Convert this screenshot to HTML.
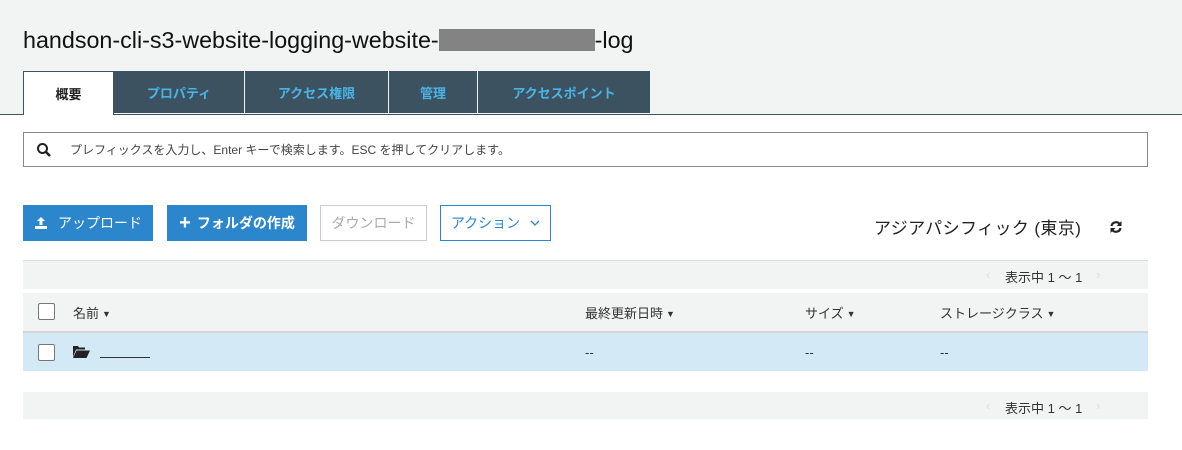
<html><head><style>
body{margin:0;width:1182px;height:450px;background:#fff;font-family:"Liberation Sans","Noto Sans CJK JP",sans-serif;position:relative;overflow:hidden;color:#222}
.a{position:absolute}
.hdr{left:0;top:0;width:1182px;height:114px;background:#f2f3f3;border-bottom:1px solid #3e5362}
.tab{position:absolute;top:71px;height:42px;background:#3d5261;color:#4ab4e6;font-size:13px;font-weight:bold;display:flex;align-items:center;justify-content:center;border-right:1px solid #f2f3f3;box-sizing:border-box}
.btn{position:absolute;top:205px;height:36px;box-sizing:border-box;font-size:14px;display:flex;align-items:center;justify-content:center}
.cb{position:absolute;width:15px;height:15px;border:1px solid #777;border-radius:2px;background:#fff;left:38px}
.t{font-size:13px;color:#333;position:absolute}
.ar{font-size:9px;vertical-align:1px;margin-left:3px}
</style></head><body>
<div class="a hdr"></div>
<div class="a" style="left:23px;top:27px;font-size:23.3px;color:#111">handson-cli-s3-website-logging-website-<span style="display:inline-block;width:156px;height:22px;background:#838383;vertical-align:-3px"></span>-log</div>
<div class="tab" style="left:23px;width:91px;background:#fff;color:#222;border:1px solid #3e5362;border-bottom:none;height:44px">概要</div>
<div class="tab" style="left:114px;width:131px">プロパティ</div>
<div class="tab" style="left:245px;width:144px">アクセス権限</div>
<div class="tab" style="left:389px;width:89px">管理</div>
<div class="tab" style="left:478px;width:172px;border:none">アクセスポイント</div>
<div class="a" style="left:23px;top:132px;width:1125px;height:35px;border:1px solid #888;box-sizing:border-box;font-size:12px;color:#444;display:flex;align-items:center">
<svg width="16" height="16" viewBox="0 0 16 16" style="margin:0 18px 0 12px"><circle cx="6.5" cy="6.5" r="4.5" fill="none" stroke="#222" stroke-width="2"/><path d="M10 10l4 4" stroke="#222" stroke-width="2.5"/></svg>プレフィックスを入力し、Enter キーで検索します。ESC を押してクリアします。</div>
<div class="btn" style="left:23px;width:130px;background:#2b86cb;color:#fff"><svg width="14" height="14" viewBox="0 0 14 14" style="margin-right:10px"><path d="M7 1l-4 4h2.5v4h3V5H11z M1 10h12v3H1z" fill="#fff"/></svg>アップロード</div>
<div class="btn" style="left:167px;width:140px;background:#2b86cb;color:#fff;font-weight:bold"><span style="font-size:20px;margin-right:6px">+</span>フォルダの作成</div>
<div class="btn" style="left:320px;width:107px;border:1px solid #ccc;color:#aaa">ダウンロード</div>
<div class="btn" style="left:440px;width:111px;border:1px solid #2b86cb;color:#2b86cb">アクション <svg width="10" height="6" viewBox="0 0 10 6" style="margin-left:10px"><path d="M1 1l4 4 4-4" fill="none" stroke="#2b86cb" stroke-width="1.3"/></svg></div>
<div class="a" style="left:874px;top:214px;font-size:17px;letter-spacing:0.4px;color:#222">アジアパシフィック (東京)</div>
<svg class="a" style="left:1109px;top:220px" width="14" height="14" viewBox="0 0 14 14"><path d="M2.5 6A4.6 4.6 0 0 1 11 4.5 M11.5 8A4.6 4.6 0 0 1 3 9.5" fill="none" stroke="#222" stroke-width="2.2"/><path d="M12.5 1v5h-5z M1.5 13V8h5z" fill="#222"/></svg>
<div class="a" style="left:23px;top:260px;width:1125px;height:28px;background:#f2f3f3;border-top:1px solid #ddd"></div>
<div class="t" style="left:986px;top:267px;color:#ddd">‹</div><div class="t" style="left:1005px;top:267px">表示中 1 〜 1</div><div class="t" style="left:1096px;top:267px;color:#ddd">›</div>
<div class="a" style="left:23px;top:293px;width:1125px;height:38px;background:#f2f3f3;border-bottom:2px solid #d5d5d5"></div>
<div class="cb" style="top:303px"></div>
<div class="t" style="left:73px;top:303px">名前<span class="ar">▼</span></div>
<div class="t" style="left:585px;top:303px">最終更新日時<span class="ar">▼</span></div>
<div class="t" style="left:805px;top:303px">サイズ<span class="ar">▼</span></div>
<div class="t" style="left:940px;top:303px">ストレージクラス<span class="ar">▼</span></div>
<div class="a" style="left:23px;top:333px;width:1125px;height:38px;background:#d4e9f6"></div>
<div class="cb" style="top:344px"></div>
<svg class="a" style="left:73px;top:346px" width="17" height="12" viewBox="0 0 17 12"><path d="M0 0h5l1 1.5h6v2H3L0 11z M3.5 4.5H17L13.5 12H0z" fill="#222"/></svg>
<div class="a" style="left:100px;top:357px;width:50px;height:1px;background:#333"></div>
<div class="t" style="left:585px;top:345px">--</div><div class="t" style="left:805px;top:345px">--</div><div class="t" style="left:940px;top:345px">--</div>
<div class="a" style="left:23px;top:392px;width:1125px;height:27px;background:#f2f3f3"></div>
<div class="t" style="left:986px;top:398px;color:#ddd">‹</div><div class="t" style="left:1005px;top:398px">表示中 1 〜 1</div><div class="t" style="left:1096px;top:398px;color:#ddd">›</div>
</body></html>
